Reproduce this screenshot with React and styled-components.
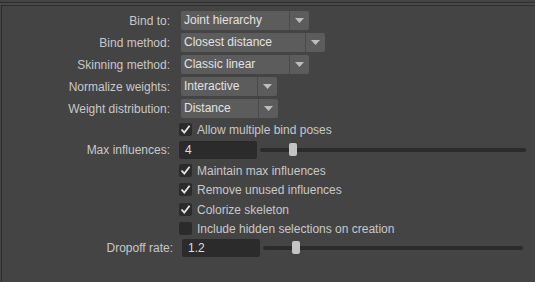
import React from "react";
import styled, { createGlobalStyle } from "styled-components";

const GlobalStyle = createGlobalStyle`
  html, body { margin: 0; padding: 0; background: #444444; }
  body { font-family: "Liberation Sans", Arial, sans-serif; }
  * { box-sizing: border-box; }
`;

const Panel = styled.div`
  width: 535px;
  height: 282px;
  background: #444444;
  padding-top: 2px;
  display: flex;
  flex-direction: column;
  overflow: hidden;
`;

const TopRule = styled.div`
  height: 3px;
  border-top: 1px solid #2c2c2c;
  background: #4a4a4a;
`;

const Body = styled.div`
  flex: 1;
  margin-left: 1px;
  border-top: 1px solid #2c2c2c;
  border-left: 1px solid #2c2c2c;
  padding-top: 5px;
  display: flex;
  flex-direction: column;
`;

const Row = styled.div`
  display: flex;
  align-items: center;
  height: ${(p) => p.$h || 19}px;
  margin-top: ${(p) => p.$mt || 0}px;
`;

const Label = styled.div`
  width: ${(p) => p.$w || 168}px;
  flex: none;
  text-align: right;
  font-size: 12px;
  color: #c8c8c8;
  white-space: nowrap;
`;

const Dropdown = styled.div`
  margin-left: ${(p) => p.$ml || 11}px;
  width: ${(p) => p.$w}px;
  height: 19px;
  display: flex;
  background: #5c5c5c;
  border-radius: 2px;
  overflow: hidden;
`;

const DropText = styled.div`
  flex: 1;
  padding-left: 3px;
  font-size: 12px;
  line-height: 19px;
  color: #e2e2e2;
  white-space: nowrap;
`;

const DropArrow = styled.div`
  width: 20px;
  flex: none;
  border-left: 1px solid #4a4a4a;
  display: flex;
  align-items: center;
  justify-content: center;
`;

const CheckRow = styled(Row)`
  padding-left: ${(p) => p.$pl || 177}px;
`;

const Box = styled.div`
  width: 13px;
  height: 13px;
  flex: none;
  background: #2b2b2b;
  border-radius: 2px;
  display: flex;
  align-items: center;
  justify-content: center;
`;

const CheckText = styled.div`
  margin-left: 5px;
  font-size: 12px;
  color: #c8c8c8;
  white-space: nowrap;
`;

const Field = styled.div`
  margin-left: ${(p) => p.$ml || 9}px;
  width: 78px;
  height: 18px;
  flex: none;
  background: #2b2b2b;
  border-radius: 2px;
  padding-left: 6px;
  font-size: 12px;
  line-height: 19px;
  color: #dedede;
`;

const SliderWrap = styled.div`
  flex: 1;
  margin-left: 3px;
  margin-right: ${(p) => p.$mr || 9}px;
  display: flex;
  align-items: center;
  height: 100%;
`;

const Track = styled.div`
  position: relative;
  width: 100%;
  height: 4px;
  background: #2b2b2b;
  border-radius: 2px;
`;

const Thumb = styled.div`
  position: absolute;
  top: -5px;
  width: 8px;
  height: 13px;
  background: #c4c4c4;
  border-radius: 2px;
`;

const Arrow = () => (
  <svg width="9" height="5" viewBox="0 0 9 5">
    <polygon points="0,0 9,0 4.5,5" fill="#bdbdbd" />
  </svg>
);

const Check = () => (
  <svg width="11" height="11" viewBox="0 0 11 11">
    <polyline points="1.5,5.5 4.3,8.6 9.6,1.8" fill="none" stroke="#e6e6e6" strokeWidth="1.8" />
  </svg>
);

const DropRow = ({ label, value, width, mt }) => (
  <Row $mt={mt}>
    <Label>{label}</Label>
    <Dropdown $w={width}>
      <DropText>{value}</DropText>
      <DropArrow>
        <Arrow />
      </DropArrow>
    </Dropdown>
  </Row>
);

const CheckItem = ({ text, checked, mt }) => (
  <CheckRow $mt={mt}>
    <Box>{checked && <Check />}</Box>
    <CheckText>{text}</CheckText>
  </CheckRow>
);

const SliderRow = ({ label, value, labelW, fieldMl, mr, mt, pos }) => (
  <Row $h={20} $mt={mt}>
    <Label $w={labelW}>{label}</Label>
    <Field $ml={fieldMl}>{value}</Field>
    <SliderWrap $mr={mr}>
      <Track>
        <Thumb style={{ left: pos }} />
      </Track>
    </SliderWrap>
  </Row>
);

export default function App() {
  return (
    <>
      <GlobalStyle />
      <Panel>
        <TopRule />
        <Body>
          <DropRow label="Bind to:" value="Joint hierarchy" width={128} />
          <DropRow label="Bind method:" value="Closest distance" width={144} mt={3} />
          <DropRow label="Skinning method:" value="Classic linear" width={128} mt={3} />
          <DropRow label="Normalize weights:" value="Interactive" width={96} mt={3} />
          <DropRow label="Weight distribution:" value="Distance" width={97} mt={3} />
          <CheckItem text="Allow multiple bind poses" checked mt={2} />
          <SliderRow label="Max influences:" value="4" pos={29} mt={1} />
          <CheckItem text="Maintain max influences" checked mt={1} />
          <CheckItem text="Remove unused influences" checked />
          <CheckItem text="Colorize skeleton" checked mt={1} />
          <CheckItem text="Include hidden selections on creation" />
          <SliderRow label="Dropoff rate:" value="1.2" labelW={171} mr={12} pos={29} />
        </Body>
      </Panel>
    </>
  );
}
